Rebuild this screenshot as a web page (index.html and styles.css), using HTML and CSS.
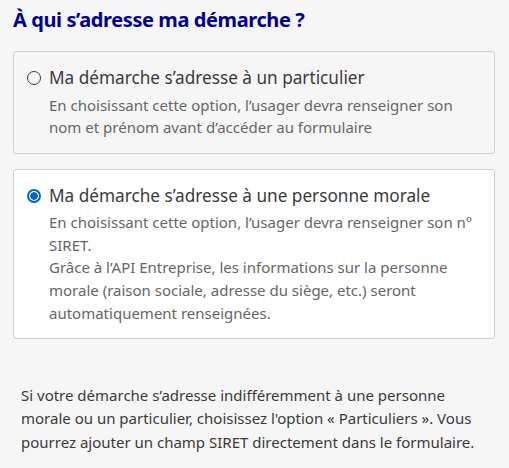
FILE: index.html
```html
<!DOCTYPE html>
<html lang="fr">
<head>
<meta charset="utf-8">
<link rel="stylesheet" href="styles.css">
</head>
<body>
<main class="page">
  <h2 class="title">À qui s’adresse ma démarche ?</h2>
  <label class="card">
    <span class="radio"></span>
    <span class="body">
      <span class="label">Ma démarche s’adresse à un particulier</span>
      <span class="desc">En choisissant cette option, l’usager devra renseigner son nom et prénom avant d’accéder au formulaire</span>
    </span>
  </label>
  <label class="card card--active">
    <span class="radio radio--checked"></span>
    <span class="body">
      <span class="label">Ma démarche s’adresse à une personne morale</span>
      <span class="desc">En choisissant cette option, l’usager devra renseigner son n° SIRET.<br>Grâce à l’API Entreprise, les informations sur la personne morale (raison sociale, adresse du siège, etc.) seront automatiquement renseignées.</span>
    </span>
  </label>
  <p class="note">Si votre démarche s’adresse indifféremment à une personne morale ou un particulier, choisissez l'option « Particuliers ». Vous pourrez ajouter un champ SIRET directement dans le formulaire.</p>
</main>
</body>
</html>
```
FILE: styles.css
```css
html, body {
  margin: 0;
  background: #f6f6f6;
}
.page {
  font-family: "Noto Sans", "Open Sans", sans-serif;
  padding: 7px 14px 0 13px;
  color: #3a3a3a;
}
.title {
  margin: 0 0 18px;
  font-size: 20px;
  font-weight: 700;
  color: #000091;
  line-height: 26px;
  letter-spacing: -0.4px;
}
.card {
  display: flex;
  gap: 8px;
  border: 1px solid #d0d0d0;
  border-radius: 3px;
  padding: 13px 14px 14px 13px;
  margin-bottom: 15px;
  background: #f6f6f6;
}
.card--active {
  background: #fff;
}
.radio {
  flex: none;
  box-sizing: border-box;
  width: 14px;
  height: 14px;
  border: 1px solid #3a3a3a;
  border-radius: 50%;
  margin-top: 6px;
}
.radio--checked {
  border: 2px solid #0063cb;
  background: radial-gradient(circle, #0063cb 0 3.5px, #fff 4px);
}
.body {
  display: flex;
  flex-direction: column;
}
.label {
  font-size: 17.2px;
  line-height: 26px;
  color: #3a3a3a;
}
.desc {
  margin-top: 2.5px;
  font-size: 15px;
  line-height: 22.6px;
  color: #666;
}
.note {
  margin: 45px 0 0 8px;
  font-size: 15px;
  line-height: 23.3px;
  color: #3a3a3a;
}
```
